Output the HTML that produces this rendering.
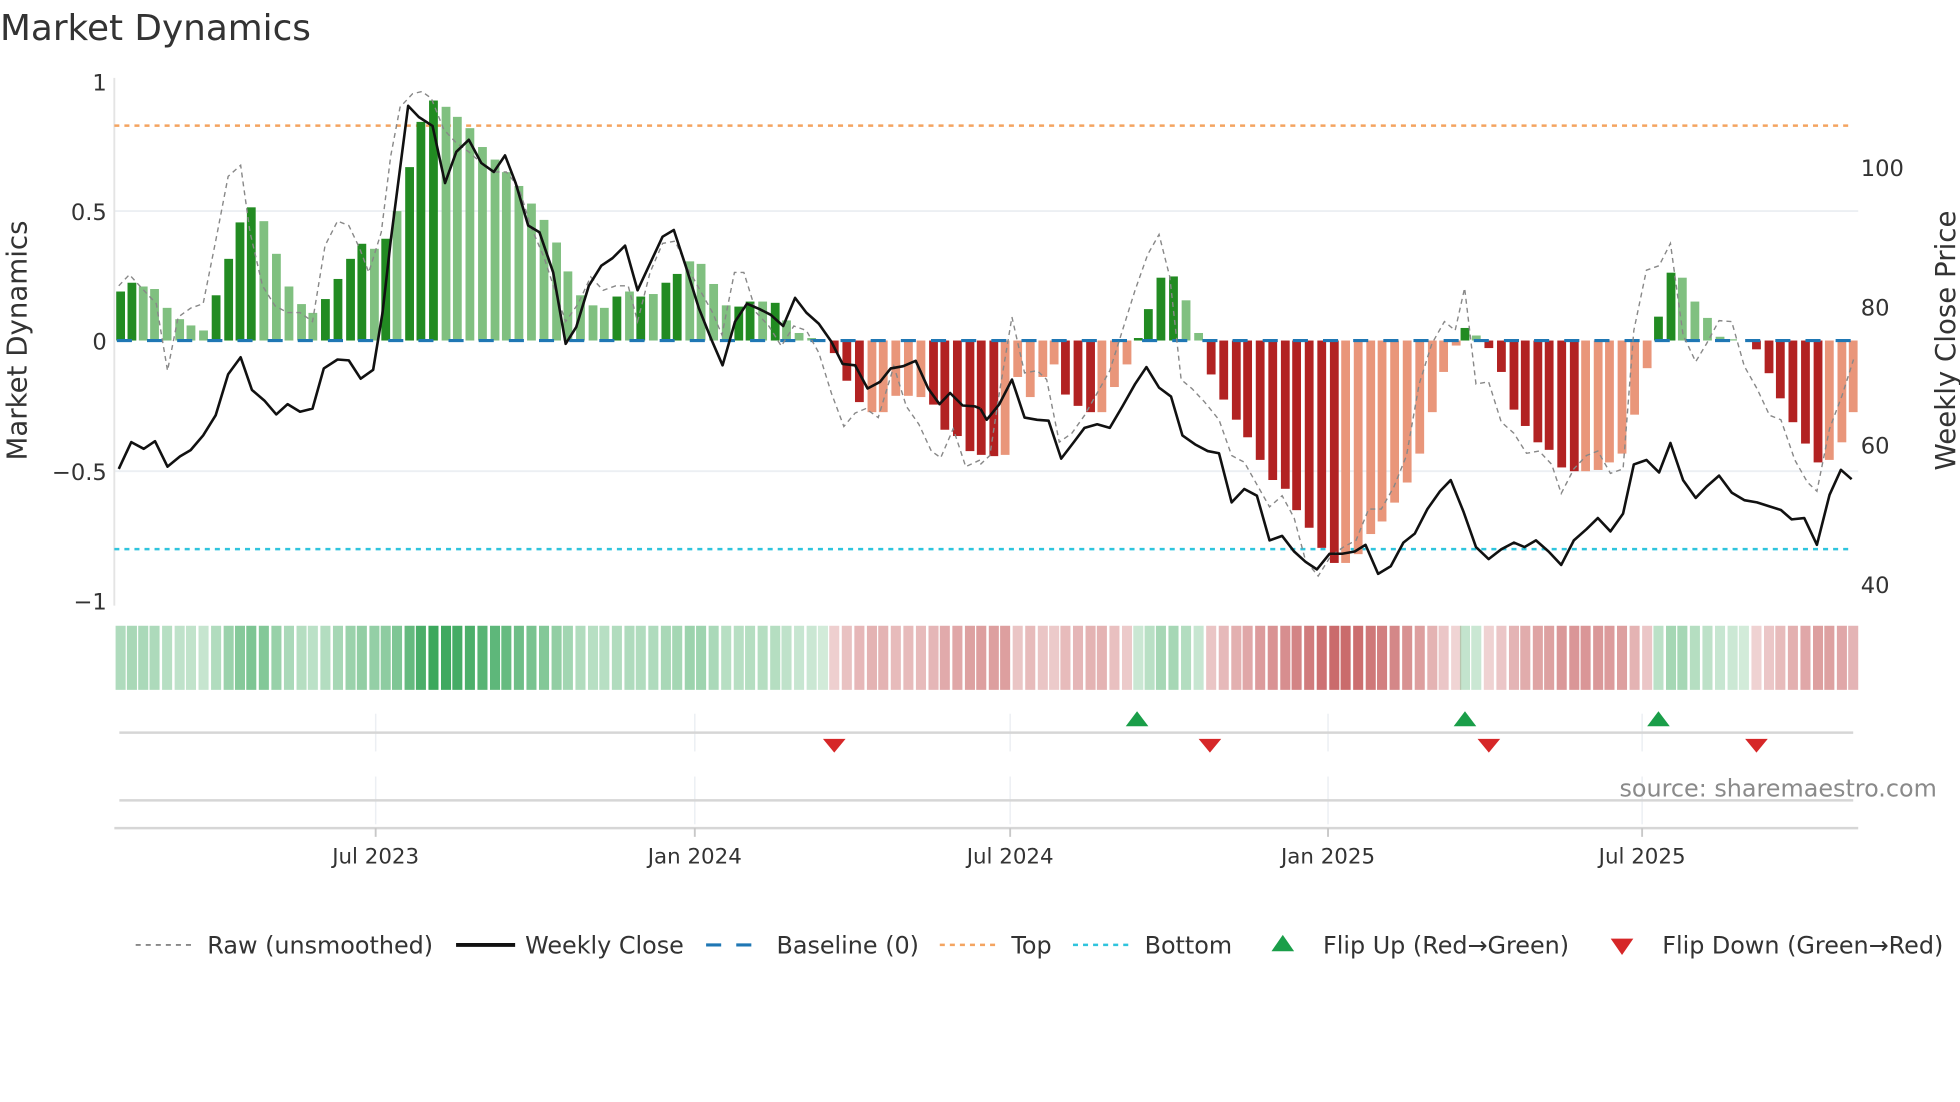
<!DOCTYPE html>
<html><head><meta charset="utf-8"><style>
html,body{margin:0;padding:0;background:#fff;}
svg{display:block;font-family:"DejaVu Sans","Liberation Sans",sans-serif;}
.a{fill:#228b22}.b{fill:#80c080}.c{fill:#b22222}.d{fill:#e9967a}
.g{fill:#31a354}.r{fill:#c4595a}
</style></head><body>
<svg width="1960" height="1102" viewBox="0 0 1560 877" preserveAspectRatio="none" xmlns="http://www.w3.org/2000/svg">
<text x="0" y="32" font-size="28.5" fill="#333">Market Dynamics</text>
<line x1="91" y1="168" x2="1479" y2="168" stroke="#eceff3" stroke-width="1.5"/>
<line x1="91" y1="375" x2="1479" y2="375" stroke="#eceff3" stroke-width="1.5"/>
<line x1="91" y1="62" x2="91" y2="482" stroke="#e4e4e4" stroke-width="1.5"/>
<g font-size="18" fill="#333" text-anchor="end">
<text x="85" y="72">1</text><text x="85" y="175">0.5</text><text x="85" y="278">0</text><text x="85" y="382">−0.5</text><text x="85" y="485">−1</text>
</g>
<g font-size="18" fill="#333">
<text x="1481" y="140">100</text><text x="1481" y="251">80</text><text x="1481" y="361">60</text><text x="1481" y="472">40</text>
</g>
<text transform="translate(21,271) rotate(-90)" font-size="22" fill="#333" text-anchor="middle">Market Dynamics</text>
<text transform="translate(1556,271) rotate(-90)" font-size="22" fill="#333" text-anchor="middle">Weekly Close Price</text>
<line x1="91" y1="100" x2="1475" y2="100" stroke="#f4a460" stroke-width="2" stroke-dasharray="4 4"/>
<line x1="91" y1="437" x2="1475" y2="437" stroke="#2fc4dd" stroke-width="2" stroke-dasharray="4 4"/>
<g>
<rect class="a" x="92.5" y="232" width="7" height="39"/>
<rect class="a" x="101.5" y="225" width="7" height="46"/>
<rect class="b" x="110.5" y="228" width="7" height="43"/>
<rect class="b" x="119.5" y="230" width="7" height="41"/>
<rect class="b" x="129.5" y="245" width="7" height="26"/>
<rect class="b" x="139.5" y="254" width="7" height="17"/>
<rect class="b" x="148.5" y="259" width="7" height="12"/>
<rect class="b" x="158.5" y="263" width="7" height="8"/>
<rect class="a" x="168.5" y="235" width="7" height="36"/>
<rect class="a" x="178.5" y="206" width="7" height="65"/>
<rect class="a" x="187.5" y="177" width="7" height="94"/>
<rect class="a" x="196.5" y="165" width="7" height="106"/>
<rect class="b" x="206.5" y="176" width="7" height="95"/>
<rect class="b" x="216.5" y="202" width="7" height="69"/>
<rect class="b" x="226.5" y="228" width="7" height="43"/>
<rect class="b" x="236.5" y="242" width="7" height="29"/>
<rect class="b" x="245.5" y="249" width="7" height="22"/>
<rect class="a" x="255.5" y="238" width="7" height="33"/>
<rect class="a" x="265.5" y="222" width="7" height="49"/>
<rect class="a" x="275.5" y="206" width="7" height="65"/>
<rect class="a" x="284.5" y="194" width="7" height="77"/>
<rect class="b" x="294.5" y="198" width="7" height="73"/>
<rect class="a" x="303.5" y="190" width="7" height="81"/>
<rect class="b" x="312.5" y="168" width="7" height="103"/>
<rect class="a" x="322.5" y="133" width="7" height="138"/>
<rect class="a" x="331.5" y="97" width="7" height="174"/>
<rect class="a" x="341.5" y="80" width="7" height="191"/>
<rect class="b" x="351.5" y="85" width="7" height="186"/>
<rect class="b" x="360.5" y="93" width="7" height="178"/>
<rect class="b" x="370.5" y="102" width="7" height="169"/>
<rect class="b" x="380.5" y="117" width="7" height="154"/>
<rect class="b" x="390.5" y="127" width="7" height="144"/>
<rect class="b" x="399.5" y="137" width="7" height="134"/>
<rect class="b" x="409.5" y="148" width="7" height="123"/>
<rect class="b" x="419.5" y="162" width="7" height="109"/>
<rect class="b" x="429.5" y="175" width="7" height="96"/>
<rect class="b" x="439.5" y="193" width="7" height="78"/>
<rect class="b" x="448.5" y="216" width="7" height="55"/>
<rect class="b" x="458.5" y="235" width="7" height="36"/>
<rect class="b" x="468.5" y="243" width="7" height="28"/>
<rect class="b" x="477.5" y="245" width="7" height="26"/>
<rect class="a" x="487.5" y="236" width="7" height="35"/>
<rect class="b" x="497.5" y="232" width="7" height="39"/>
<rect class="a" x="506.5" y="236" width="7" height="35"/>
<rect class="b" x="516.5" y="234" width="7" height="37"/>
<rect class="a" x="526.5" y="225" width="7" height="46"/>
<rect class="a" x="535.5" y="218" width="7" height="53"/>
<rect class="b" x="545.5" y="208" width="7" height="63"/>
<rect class="b" x="554.5" y="210" width="7" height="61"/>
<rect class="b" x="564.5" y="226" width="7" height="45"/>
<rect class="b" x="574.5" y="243" width="7" height="28"/>
<rect class="a" x="584.5" y="244" width="7" height="27"/>
<rect class="a" x="593.5" y="240" width="7" height="31"/>
<rect class="b" x="603.5" y="240" width="7" height="31"/>
<rect class="a" x="613.5" y="241" width="7" height="30"/>
<rect class="b" x="622.5" y="255" width="7" height="16"/>
<rect class="b" x="632.5" y="265" width="7" height="6"/>
<rect class="b" x="642.5" y="269" width="7" height="2"/>
<rect class="c" x="660.5" y="271" width="7" height="10"/>
<rect class="c" x="670.5" y="271" width="7" height="32"/>
<rect class="c" x="680.5" y="271" width="7" height="49"/>
<rect class="d" x="690.5" y="271" width="7" height="57"/>
<rect class="d" x="699.5" y="271" width="7" height="57"/>
<rect class="d" x="709.5" y="271" width="7" height="44"/>
<rect class="d" x="719.5" y="271" width="7" height="44"/>
<rect class="d" x="729.5" y="271" width="7" height="45"/>
<rect class="c" x="739.5" y="271" width="7" height="51"/>
<rect class="c" x="748.5" y="271" width="7" height="71"/>
<rect class="c" x="758.5" y="271" width="7" height="76"/>
<rect class="c" x="768.5" y="271" width="7" height="88"/>
<rect class="c" x="777.5" y="271" width="7" height="91"/>
<rect class="c" x="787.5" y="271" width="7" height="92"/>
<rect class="d" x="796.5" y="271" width="7" height="91"/>
<rect class="d" x="806.5" y="271" width="7" height="29"/>
<rect class="d" x="816.5" y="271" width="7" height="45"/>
<rect class="d" x="826.5" y="271" width="7" height="29"/>
<rect class="d" x="835.5" y="271" width="7" height="19"/>
<rect class="c" x="844.5" y="271" width="7" height="43"/>
<rect class="c" x="854.5" y="271" width="7" height="52"/>
<rect class="c" x="864.5" y="271" width="7" height="57"/>
<rect class="d" x="873.5" y="271" width="7" height="57"/>
<rect class="d" x="883.5" y="271" width="7" height="37"/>
<rect class="d" x="893.5" y="271" width="7" height="19"/>
<rect class="a" x="902.5" y="269" width="7" height="2"/>
<rect class="a" x="910.5" y="246" width="7" height="25"/>
<rect class="a" x="920.5" y="221" width="7" height="50"/>
<rect class="a" x="930.5" y="220" width="7" height="51"/>
<rect class="b" x="940.5" y="239" width="7" height="32"/>
<rect class="b" x="950.5" y="265" width="7" height="6"/>
<rect class="c" x="960.5" y="271" width="7" height="27"/>
<rect class="c" x="970.5" y="271" width="7" height="47"/>
<rect class="c" x="980.5" y="271" width="7" height="63"/>
<rect class="c" x="989.5" y="271" width="7" height="77"/>
<rect class="c" x="999.5" y="271" width="7" height="95"/>
<rect class="c" x="1009.5" y="271" width="7" height="111"/>
<rect class="c" x="1019.5" y="271" width="7" height="118"/>
<rect class="c" x="1028.5" y="271" width="7" height="135"/>
<rect class="c" x="1038.5" y="271" width="7" height="149"/>
<rect class="c" x="1048.5" y="271" width="7" height="165"/>
<rect class="c" x="1058.5" y="271" width="7" height="177"/>
<rect class="d" x="1067.5" y="271" width="7" height="177"/>
<rect class="d" x="1077.5" y="271" width="7" height="170"/>
<rect class="d" x="1087.5" y="271" width="7" height="154"/>
<rect class="d" x="1096.5" y="271" width="7" height="144"/>
<rect class="d" x="1106.5" y="271" width="7" height="129"/>
<rect class="d" x="1116.5" y="271" width="7" height="113"/>
<rect class="d" x="1126.5" y="271" width="7" height="90"/>
<rect class="d" x="1136.5" y="271" width="7" height="57"/>
<rect class="d" x="1145.5" y="271" width="7" height="25"/>
<rect class="d" x="1155.5" y="271" width="7" height="4"/>
<rect class="a" x="1162.5" y="261" width="7" height="10"/>
<rect class="b" x="1171.5" y="267" width="7" height="4"/>
<rect class="c" x="1181.5" y="271" width="7" height="6"/>
<rect class="c" x="1191.5" y="271" width="7" height="25"/>
<rect class="c" x="1201.5" y="271" width="7" height="55"/>
<rect class="c" x="1210.5" y="271" width="7" height="68"/>
<rect class="c" x="1220.5" y="271" width="7" height="81"/>
<rect class="c" x="1229.5" y="271" width="7" height="87"/>
<rect class="c" x="1239.5" y="271" width="7" height="101"/>
<rect class="c" x="1249.5" y="271" width="7" height="104"/>
<rect class="d" x="1258.5" y="271" width="7" height="104"/>
<rect class="d" x="1268.5" y="271" width="7" height="103"/>
<rect class="d" x="1277.5" y="271" width="7" height="97"/>
<rect class="d" x="1287.5" y="271" width="7" height="90"/>
<rect class="d" x="1297.5" y="271" width="7" height="59"/>
<rect class="d" x="1307.5" y="271" width="7" height="22"/>
<rect class="a" x="1316.5" y="252" width="7" height="19"/>
<rect class="a" x="1326.5" y="217" width="7" height="54"/>
<rect class="b" x="1335.5" y="221" width="7" height="50"/>
<rect class="b" x="1345.5" y="240" width="7" height="31"/>
<rect class="b" x="1355.5" y="253" width="7" height="18"/>
<rect class="b" x="1365.5" y="268" width="7" height="3"/>
<rect class="b" x="1375.5" y="270" width="7" height="1"/>
<rect class="c" x="1394.5" y="271" width="7" height="7"/>
<rect class="c" x="1404.5" y="271" width="7" height="26"/>
<rect class="c" x="1413.5" y="271" width="7" height="46"/>
<rect class="c" x="1423.5" y="271" width="7" height="65"/>
<rect class="c" x="1433.5" y="271" width="7" height="82"/>
<rect class="c" x="1443.5" y="271" width="7" height="97"/>
<rect class="d" x="1452.5" y="271" width="7" height="95"/>
<rect class="d" x="1462.5" y="271" width="7" height="81"/>
<rect class="d" x="1471.5" y="271" width="7" height="57"/>
</g>
<line x1="93" y1="271" x2="1475" y2="271" stroke="#1f77b4" stroke-width="2.5" stroke-dasharray="12 12"/>
<g transform="scale(0.4975,0.3554)" fill="none">
<polyline vector-effect="non-scaling-stroke" stroke="#888" stroke-width="1.4" stroke-dasharray="5 4" points="190,640 207,615 230,650 250,680 268,830 285,710 305,690 325,680 345,540 365,395 385,370 400,520 420,640 440,685 460,700 480,700 500,720 520,550 540,495 558,505 575,555 590,610 610,520 625,350 640,240 660,210 675,205 690,220 710,290 730,320 750,340 770,365 790,385 810,385 830,420 850,510 870,575 890,660 905,720 925,680 945,620 965,650 985,640 1005,640 1020,720 1040,610 1060,545 1080,540 1100,600 1120,650 1140,700 1155,750 1175,610 1190,610 1210,700 1230,730 1250,775 1270,730 1290,740 1310,790 1330,880 1350,955 1368,925 1385,915 1405,935 1430,820 1450,910 1470,950 1490,1010 1505,1025 1525,960 1545,1045 1568,1030"/>
<polyline vector-effect="non-scaling-stroke" stroke="#111" stroke-width="2.6" stroke-linejoin="round" points="190,1050 210,990 230,1005 248,988 268,1045 288,1022 305,1008 325,975 345,930 365,838 385,800 403,873 423,897 442,928 460,905 480,922 500,915 518,825 540,805 558,807 577,848 597,828 612,700 625,540 653,237 670,262 692,282 712,410 730,340 750,313 770,365 790,385 808,348 825,410 845,505 863,520 885,610 905,770 922,732 942,640 962,595 980,578 1000,550 1020,650 1040,590 1060,530 1078,515 1098,600 1118,690 1138,760 1156,818 1176,720 1195,680 1215,692 1233,705 1253,730 1272,667 1290,700 1310,725 1330,765 1348,815 1368,818 1388,870 1408,855 1425,825 1445,820 1465,808 1485,870 1503,905 1520,880 1540,908 1560,910 1568,915"/>
</g>
<g transform="translate(780.3,0) scale(0.5025,0.3554)" fill="none">
<polyline vector-effect="non-scaling-stroke" stroke="#888" stroke-width="1.4" stroke-dasharray="5 4" points="0,1040 15,1020 30,880 50,710 70,835 90,830 105,850 125,990 145,970 165,930 185,880 205,830 225,740 245,650 265,570 283,525 300,620 318,850 335,870 355,900 378,940 398,1020 418,1035 438,1085 458,1135 478,1110 497,1160 515,1255 535,1290 555,1245 575,1225 595,1210 615,1140 635,1140 655,1090 675,1020 695,860 715,770 735,720 752,740 767,645 785,860 805,855 825,945 845,970 865,1015 885,1010 905,1040 920,1105 940,1050 960,1020 978,1010 998,1060 1018,1050 1035,740 1055,605 1075,595 1093,545 1113,750 1133,810 1150,770 1170,718 1190,720 1210,820 1230,870 1250,930 1268,940 1290,1030 1310,1080 1325,1100 1345,960 1365,885 1383,805"/>
<polyline vector-effect="non-scaling-stroke" stroke="#111" stroke-width="2.6" stroke-linejoin="round" points="0,915 10,940 30,905 50,850 70,935 90,940 108,942 128,1027 148,990 165,958 185,950 205,958 225,910 245,860 263,822 283,868 302,888 320,975 340,995 360,1010 378,1015 398,1125 418,1095 438,1110 458,1210 478,1200 497,1235 515,1258 533,1275 553,1240 573,1240 593,1235 610,1220 630,1285 650,1268 670,1215 688,1195 708,1140 728,1100 745,1075 765,1145 785,1225 805,1252 825,1230 845,1215 862,1225 880,1210 900,1235 920,1265 940,1210 960,1185 978,1160 998,1190 1018,1150 1035,1040 1055,1030 1075,1058 1093,992 1113,1075 1133,1115 1150,1090 1170,1065 1190,1103 1210,1120 1230,1125 1248,1133 1268,1142 1285,1163 1305,1160 1325,1220 1345,1108 1363,1052 1380,1073"/>
</g>
<g>
<rect class="g" x="92" y="498" width="8" height="51" fill-opacity=".39"/>
<rect class="g" x="101" y="498" width="8" height="51" fill-opacity=".42"/>
<rect class="g" x="110" y="498" width="8" height="51" fill-opacity=".41"/>
<rect class="g" x="119" y="498" width="8" height="51" fill-opacity=".4"/>
<rect class="g" x="129" y="498" width="8" height="51" fill-opacity=".35"/>
<rect class="g" x="139" y="498" width="8" height="51" fill-opacity=".31"/>
<rect class="g" x="148" y="498" width="8" height="51" fill-opacity=".3"/>
<rect class="g" x="158" y="498" width="8" height="51" fill-opacity=".28"/>
<rect class="g" x="168" y="498" width="8" height="51" fill-opacity=".38"/>
<rect class="g" x="178" y="498" width="8" height="51" fill-opacity=".49"/>
<rect class="g" x="187" y="498" width="8" height="51" fill-opacity=".59"/>
<rect class="g" x="196" y="498" width="8" height="51" fill-opacity=".63"/>
<rect class="g" x="206" y="498" width="8" height="51" fill-opacity=".6"/>
<rect class="g" x="216" y="498" width="8" height="51" fill-opacity=".5"/>
<rect class="g" x="226" y="498" width="8" height="51" fill-opacity=".41"/>
<rect class="g" x="236" y="498" width="8" height="51" fill-opacity=".36"/>
<rect class="g" x="245" y="498" width="8" height="51" fill-opacity=".33"/>
<rect class="g" x="255" y="498" width="8" height="51" fill-opacity=".37"/>
<rect class="g" x="265" y="498" width="8" height="51" fill-opacity=".43"/>
<rect class="g" x="275" y="498" width="8" height="51" fill-opacity=".49"/>
<rect class="g" x="284" y="498" width="8" height="51" fill-opacity=".53"/>
<rect class="g" x="294" y="498" width="8" height="51" fill-opacity=".52"/>
<rect class="g" x="303" y="498" width="8" height="51" fill-opacity=".55"/>
<rect class="g" x="312" y="498" width="8" height="51" fill-opacity=".62"/>
<rect class="g" x="322" y="498" width="8" height="51" fill-opacity=".75"/>
<rect class="g" x="331" y="498" width="8" height="51" fill-opacity=".88"/>
<rect class="g" x="341" y="498" width="8" height="51" fill-opacity=".95"/>
<rect class="g" x="351" y="498" width="8" height="51" fill-opacity=".93"/>
<rect class="g" x="360" y="498" width="8" height="51" fill-opacity=".9"/>
<rect class="g" x="370" y="498" width="8" height="51" fill-opacity=".87"/>
<rect class="g" x="380" y="498" width="8" height="51" fill-opacity=".81"/>
<rect class="g" x="390" y="498" width="8" height="51" fill-opacity=".78"/>
<rect class="g" x="399" y="498" width="8" height="51" fill-opacity=".74"/>
<rect class="g" x="409" y="498" width="8" height="51" fill-opacity=".7"/>
<rect class="g" x="419" y="498" width="8" height="51" fill-opacity=".65"/>
<rect class="g" x="429" y="498" width="8" height="51" fill-opacity=".6"/>
<rect class="g" x="439" y="498" width="8" height="51" fill-opacity=".53"/>
<rect class="g" x="448" y="498" width="8" height="51" fill-opacity=".45"/>
<rect class="g" x="458" y="498" width="8" height="51" fill-opacity=".38"/>
<rect class="g" x="468" y="498" width="8" height="51" fill-opacity=".35"/>
<rect class="g" x="477" y="498" width="8" height="51" fill-opacity=".35"/>
<rect class="g" x="487" y="498" width="8" height="51" fill-opacity=".38"/>
<rect class="g" x="497" y="498" width="8" height="51" fill-opacity=".39"/>
<rect class="g" x="506" y="498" width="8" height="51" fill-opacity=".38"/>
<rect class="g" x="516" y="498" width="8" height="51" fill-opacity=".39"/>
<rect class="g" x="526" y="498" width="8" height="51" fill-opacity=".42"/>
<rect class="g" x="535" y="498" width="8" height="51" fill-opacity=".44"/>
<rect class="g" x="545" y="498" width="8" height="51" fill-opacity=".48"/>
<rect class="g" x="554" y="498" width="8" height="51" fill-opacity=".47"/>
<rect class="g" x="564" y="498" width="8" height="51" fill-opacity=".41"/>
<rect class="g" x="574" y="498" width="8" height="51" fill-opacity=".35"/>
<rect class="g" x="584" y="498" width="8" height="51" fill-opacity=".35"/>
<rect class="g" x="593" y="498" width="8" height="51" fill-opacity=".36"/>
<rect class="g" x="603" y="498" width="8" height="51" fill-opacity=".36"/>
<rect class="g" x="613" y="498" width="8" height="51" fill-opacity=".36"/>
<rect class="g" x="622" y="498" width="8" height="51" fill-opacity=".31"/>
<rect class="g" x="632" y="498" width="8" height="51" fill-opacity=".27"/>
<rect class="g" x="642" y="498" width="8" height="51" fill-opacity=".26"/>
<rect class="g" x="651" y="498" width="8" height="51" fill-opacity=".22"/>
<rect class="r" x="660" y="498" width="8" height="51" fill-opacity=".29"/>
<rect class="r" x="670" y="498" width="8" height="51" fill-opacity=".37"/>
<rect class="r" x="680" y="498" width="8" height="51" fill-opacity=".43"/>
<rect class="r" x="690" y="498" width="8" height="51" fill-opacity=".46"/>
<rect class="r" x="699" y="498" width="8" height="51" fill-opacity=".46"/>
<rect class="r" x="709" y="498" width="8" height="51" fill-opacity=".41"/>
<rect class="r" x="719" y="498" width="8" height="51" fill-opacity=".41"/>
<rect class="r" x="729" y="498" width="8" height="51" fill-opacity=".41"/>
<rect class="r" x="739" y="498" width="8" height="51" fill-opacity=".44"/>
<rect class="r" x="748" y="498" width="8" height="51" fill-opacity=".51"/>
<rect class="r" x="758" y="498" width="8" height="51" fill-opacity=".53"/>
<rect class="r" x="768" y="498" width="8" height="51" fill-opacity=".57"/>
<rect class="r" x="777" y="498" width="8" height="51" fill-opacity=".58"/>
<rect class="r" x="787" y="498" width="8" height="51" fill-opacity=".58"/>
<rect class="r" x="796" y="498" width="8" height="51" fill-opacity=".58"/>
<rect class="r" x="806" y="498" width="8" height="51" fill-opacity=".35"/>
<rect class="r" x="816" y="498" width="8" height="51" fill-opacity=".41"/>
<rect class="r" x="826" y="498" width="8" height="51" fill-opacity=".35"/>
<rect class="r" x="835" y="498" width="8" height="51" fill-opacity=".32"/>
<rect class="r" x="844" y="498" width="8" height="51" fill-opacity=".41"/>
<rect class="r" x="854" y="498" width="8" height="51" fill-opacity=".44"/>
<rect class="r" x="864" y="498" width="8" height="51" fill-opacity=".46"/>
<rect class="r" x="873" y="498" width="8" height="51" fill-opacity=".46"/>
<rect class="r" x="883" y="498" width="8" height="51" fill-opacity=".38"/>
<rect class="r" x="893" y="498" width="8" height="51" fill-opacity=".32"/>
<rect class="g" x="902" y="498" width="8" height="51" fill-opacity=".26"/>
<rect class="g" x="911" y="498" width="8" height="51" fill-opacity=".34"/>
<rect class="g" x="920" y="498" width="8" height="51" fill-opacity=".43"/>
<rect class="g" x="930" y="498" width="8" height="51" fill-opacity=".43"/>
<rect class="g" x="940" y="498" width="8" height="51" fill-opacity=".37"/>
<rect class="g" x="950" y="498" width="8" height="51" fill-opacity=".27"/>
<rect class="r" x="960" y="498" width="8" height="51" fill-opacity=".35"/>
<rect class="r" x="970" y="498" width="8" height="51" fill-opacity=".42"/>
<rect class="r" x="980" y="498" width="8" height="51" fill-opacity=".48"/>
<rect class="r" x="989" y="498" width="8" height="51" fill-opacity=".53"/>
<rect class="r" x="999" y="498" width="8" height="51" fill-opacity=".6"/>
<rect class="r" x="1009" y="498" width="8" height="51" fill-opacity=".65"/>
<rect class="r" x="1019" y="498" width="8" height="51" fill-opacity=".68"/>
<rect class="r" x="1028" y="498" width="8" height="51" fill-opacity=".74"/>
<rect class="r" x="1038" y="498" width="8" height="51" fill-opacity=".79"/>
<rect class="r" x="1048" y="498" width="8" height="51" fill-opacity=".85"/>
<rect class="r" x="1058" y="498" width="8" height="51" fill-opacity=".89"/>
<rect class="r" x="1067" y="498" width="8" height="51" fill-opacity=".89"/>
<rect class="r" x="1077" y="498" width="8" height="51" fill-opacity=".87"/>
<rect class="r" x="1087" y="498" width="8" height="51" fill-opacity=".81"/>
<rect class="r" x="1096" y="498" width="8" height="51" fill-opacity=".77"/>
<rect class="r" x="1106" y="498" width="8" height="51" fill-opacity=".72"/>
<rect class="r" x="1116" y="498" width="8" height="51" fill-opacity=".66"/>
<rect class="r" x="1126" y="498" width="8" height="51" fill-opacity=".58"/>
<rect class="r" x="1136" y="498" width="8" height="51" fill-opacity=".46"/>
<rect class="r" x="1145" y="498" width="8" height="51" fill-opacity=".34"/>
<rect class="r" x="1155" y="498" width="8" height="51" fill-opacity=".26"/>
<rect class="g" x="1162" y="498" width="8" height="51" fill-opacity=".29"/>
<rect class="g" x="1171" y="498" width="8" height="51" fill-opacity=".26"/>
<rect class="r" x="1181" y="498" width="8" height="51" fill-opacity=".27"/>
<rect class="r" x="1191" y="498" width="8" height="51" fill-opacity=".34"/>
<rect class="r" x="1201" y="498" width="8" height="51" fill-opacity=".45"/>
<rect class="r" x="1210" y="498" width="8" height="51" fill-opacity=".5"/>
<rect class="r" x="1220" y="498" width="8" height="51" fill-opacity=".55"/>
<rect class="r" x="1229" y="498" width="8" height="51" fill-opacity=".57"/>
<rect class="r" x="1239" y="498" width="8" height="51" fill-opacity=".62"/>
<rect class="r" x="1249" y="498" width="8" height="51" fill-opacity=".63"/>
<rect class="r" x="1258" y="498" width="8" height="51" fill-opacity=".63"/>
<rect class="r" x="1268" y="498" width="8" height="51" fill-opacity=".62"/>
<rect class="r" x="1277" y="498" width="8" height="51" fill-opacity=".6"/>
<rect class="r" x="1287" y="498" width="8" height="51" fill-opacity=".58"/>
<rect class="r" x="1297" y="498" width="8" height="51" fill-opacity=".46"/>
<rect class="r" x="1307" y="498" width="8" height="51" fill-opacity=".34"/>
<rect class="g" x="1316" y="498" width="8" height="51" fill-opacity=".33"/>
<rect class="g" x="1326" y="498" width="8" height="51" fill-opacity=".44"/>
<rect class="g" x="1335" y="498" width="8" height="51" fill-opacity=".43"/>
<rect class="g" x="1345" y="498" width="8" height="51" fill-opacity=".36"/>
<rect class="g" x="1355" y="498" width="8" height="51" fill-opacity=".32"/>
<rect class="g" x="1365" y="498" width="8" height="51" fill-opacity=".27"/>
<rect class="g" x="1375" y="498" width="8" height="51" fill-opacity=".25"/>
<rect class="g" x="1384" y="498" width="8" height="51" fill-opacity=".22"/>
<rect class="r" x="1394" y="498" width="8" height="51" fill-opacity=".27"/>
<rect class="r" x="1404" y="498" width="8" height="51" fill-opacity=".34"/>
<rect class="r" x="1413" y="498" width="8" height="51" fill-opacity=".41"/>
<rect class="r" x="1423" y="498" width="8" height="51" fill-opacity=".48"/>
<rect class="r" x="1433" y="498" width="8" height="51" fill-opacity=".53"/>
<rect class="r" x="1443" y="498" width="8" height="51" fill-opacity=".58"/>
<rect class="r" x="1452" y="498" width="8" height="51" fill-opacity=".57"/>
<rect class="r" x="1462" y="498" width="8" height="51" fill-opacity=".53"/>
<rect class="r" x="1471" y="498" width="8" height="51" fill-opacity=".45"/>
</g>
<g stroke="#eceff3" stroke-width="1.2">
<line x1="299" y1="568" x2="299" y2="598"/><line x1="553" y1="568" x2="553" y2="598"/><line x1="804" y1="568" x2="804" y2="598"/><line x1="1057" y1="568" x2="1057" y2="598"/><line x1="1307" y1="568" x2="1307" y2="598"/>
<line x1="299" y1="618" x2="299" y2="656"/><line x1="553" y1="618" x2="553" y2="656"/><line x1="804" y1="618" x2="804" y2="656"/><line x1="1057" y1="618" x2="1057" y2="656"/><line x1="1307" y1="618" x2="1307" y2="656"/>
</g>
<line x1="95" y1="583" x2="1475" y2="583" stroke="#d6d6d6" stroke-width="2"/>
<line x1="95" y1="637" x2="1475" y2="637" stroke="#d6d6d6" stroke-width="2"/>
<line x1="91" y1="659" x2="1479" y2="659" stroke="#d6d6d6" stroke-width="2"/>
<g stroke="#c8c8c8" stroke-width="1.5">
<line x1="299" y1="659" x2="299" y2="666"/><line x1="553" y1="659" x2="553" y2="666"/><line x1="804" y1="659" x2="804" y2="666"/><line x1="1057" y1="659" x2="1057" y2="666"/><line x1="1307" y1="659" x2="1307" y2="666"/>
</g>
<g fill="#1a9e49">
<polygon points="896,578 914,578 905,566"/><polygon points="1157,578 1175,578 1166,566"/><polygon points="1311,578 1329,578 1320,566"/>
</g>
<g fill="#d62728">
<polygon points="655,588 673,588 664,599"/><polygon points="954,588 972,588 963,599"/><polygon points="1176,588 1194,588 1185,599"/><polygon points="1389,588 1407,588 1398,599"/>
</g>
<text x="1289" y="634" font-size="19" fill="#8a8a8a">source: sharemaestro.com</text>
<g font-size="17" fill="#333" text-anchor="middle">
<text x="299" y="687">Jul 2023</text><text x="553" y="687">Jan 2024</text><text x="804" y="687">Jul 2024</text><text x="1057" y="687">Jan 2025</text><text x="1307" y="687">Jul 2025</text>
</g>
<g font-size="19" fill="#333">
<line x1="108" y1="752" x2="152" y2="752" stroke="#888" stroke-width="1.5" stroke-dasharray="4 4"/>
<text x="165" y="759">Raw (unsmoothed)</text>
<line x1="363" y1="752" x2="410" y2="752" stroke="#111" stroke-width="3"/>
<text x="418" y="759">Weekly Close</text>
<line x1="562" y1="752" x2="605" y2="752" stroke="#1f77b4" stroke-width="2.5" stroke-dasharray="12 12"/>
<text x="618" y="759">Baseline (0)</text>
<line x1="748" y1="752" x2="792" y2="752" stroke="#f4a460" stroke-width="2" stroke-dasharray="4 4"/>
<text x="805" y="759">Top</text>
<line x1="854" y1="752" x2="898" y2="752" stroke="#2fc4dd" stroke-width="2" stroke-dasharray="4 4"/>
<text x="911" y="759">Bottom</text>
<polygon points="1012,757 1030,757 1021,744" fill="#1a9e49"/>
<text x="1053" y="759">Flip Up (Red→Green)</text>
<polygon points="1282,747 1300,747 1291,760" fill="#d62728"/>
<text x="1323" y="759">Flip Down (Green→Red)</text>
</g>
</svg>
</body></html>
